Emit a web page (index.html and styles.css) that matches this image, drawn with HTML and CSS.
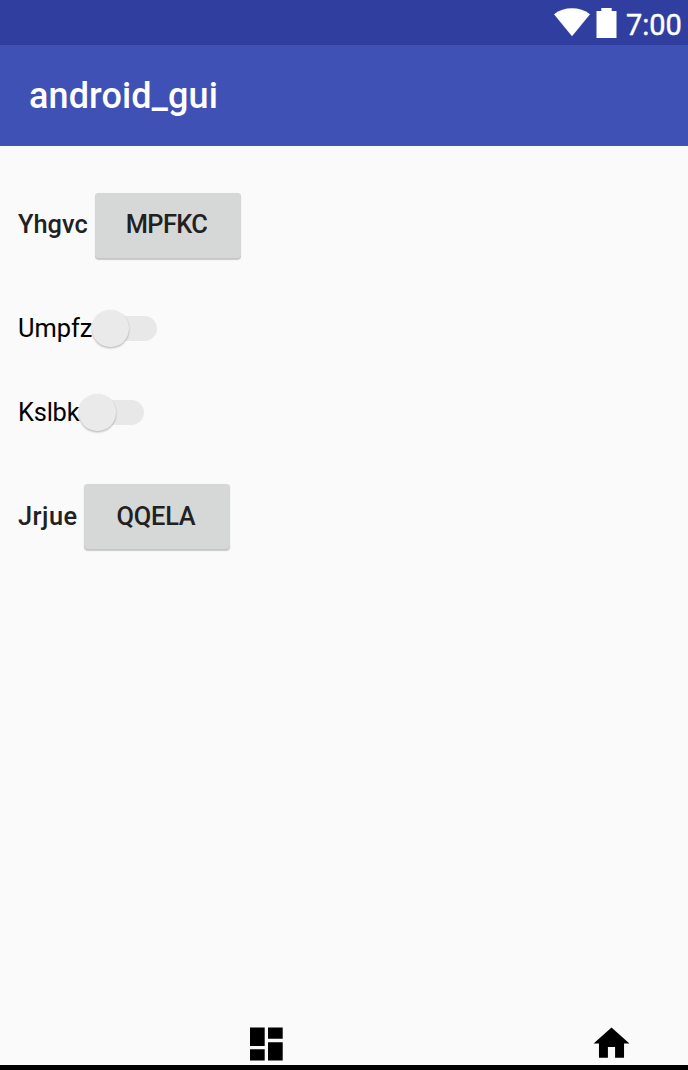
FILE: index.html
```html
<!DOCTYPE html>
<html lang="en">
<head>
<meta charset="utf-8">
<title>android_gui</title>
<link rel="stylesheet" href="styles.css">
</head>
<body>
<div class="status">
  <svg class="wifi" width="36" height="29" viewBox="0 0 36 29"><path d="M0 6.2C10-1.6 26-1.6 36 6.2L18 28.2Z"/></svg>
  <svg class="battery" width="21" height="30" viewBox="0 0 21 30"><path d="M5.3 0H15.7V3H20.5V30H.5V3H5.3Z"/></svg>
  <span class="clock">7:00</span>
</div>
<header class="toolbar"><h1 class="title">android_gui</h1></header>
<main class="content">
  <div class="row first"><span class="label">Yhgvc</span><button class="button mpfkc">MPFKC</button></div>
  <div class="row toggle"><span class="name umpfz">Umpfz</span><span class="switch"><span class="thumb"></span></span></div>
  <div class="row toggle second"><span class="name">Kslbk</span><span class="switch"><span class="thumb"></span></span></div>
  <div class="row last"><span class="label jrjue">Jrjue</span><button class="button">QQELA</button></div>
</main>
<nav class="nav">
  <svg width="44" height="44" viewBox="0 0 44 44"><path d="M6 5.5h14.7V24H6zM6 27.3h14.7v11.2H6zM24 5.5h14.7v11.3H24zM24 20.2h14.7v18.3H24z"/></svg>
  <svg width="43" height="43" viewBox="0 0 24 24"><path d="M10 20v-6h4v6h5v-8h3L12 3 2 12h3v8z"/></svg>
</nav>
</body>
</html>
```
FILE: styles.css
```css
* { box-sizing: border-box; }
body {
  margin: 0;
  width: 688px;
  height: 1070px;
  display: flex;
  flex-direction: column;
  overflow: hidden;
  background: #fafafa;
  font-family: Roboto, sans-serif;
}
.status {
  height: 45px;
  background: #303f9f;
  color: #fff;
  display: flex;
  justify-content: flex-end;
  align-items: flex-start;
  padding: 8px 6px 0 0;
}
.status svg { fill: #fff; }
.battery { margin-left: 6px; }
.clock {
  width: 56px;
  margin-left: 9px;
  font-size: 29px;
  line-height: 34px;
  white-space: nowrap;
  -webkit-text-stroke: .4px #fff;
}
.toolbar {
  height: 101px;
  background: #3f51b5;
  padding: 0 29px;
  display: flex;
  align-items: center;
}
.title { margin: 0; color: #fff; font-size: 36px; font-weight: 500; line-height: 42px; letter-spacing: .12px; }
.content { flex: 1; padding: 46px 18px 0; }
.row { display: flex; align-items: center; height: 66px; font-size: 25.4px; white-space: nowrap; }
.label { width: 77px; font-weight: 500; color: #212121; }
.first .label { padding-bottom: 2px; }
.jrjue { width: 66px; letter-spacing: .5px; }
.button {
  width: 146px;
  height: 65px;
  padding: 0 2px 0 0;
  border: 0;
  border-radius: 4px;
  background: #d6d8d7;
  box-shadow: 0 1.5px 1px rgba(0, 0, 0, .2), 0 0 1px rgba(0, 0, 0, .1);
  color: #212121;
  font: 500 25.4px Roboto, sans-serif;
  letter-spacing: -.25px;
}
.mpfkc { padding: 0 3px 2px 0; letter-spacing: -.65px; }
.toggle { height: 40px; margin-top: 50px; color: #000; }
.second { margin-top: 44px; }
.second .name { letter-spacing: -.2px; }
.last { margin-top: 51px; }
.name { width: 61px; }
.umpfz { width: 74px; }
.switch {
  width: 65px;
  height: 25px;
  margin-top: 1px;
  border-radius: 13px;
  background: linear-gradient(90deg, transparent 18px, #e8e8e8 18px);
  display: flex;
  align-items: center;
}
.thumb {
  width: 36.5px;
  height: 36.5px;
  flex: none;
  border-radius: 50%;
  background: #eaeaea;
  box-shadow: 0 1.5px 2px rgba(0, 0, 0, .22), 0 0 2px rgba(0, 0, 0, .06);
}
.nav {
  height: 49px;
  border-bottom: 5px solid #000;
  padding: 1px 55px 0 244px;
  display: flex;
  justify-content: space-between;
}
```
